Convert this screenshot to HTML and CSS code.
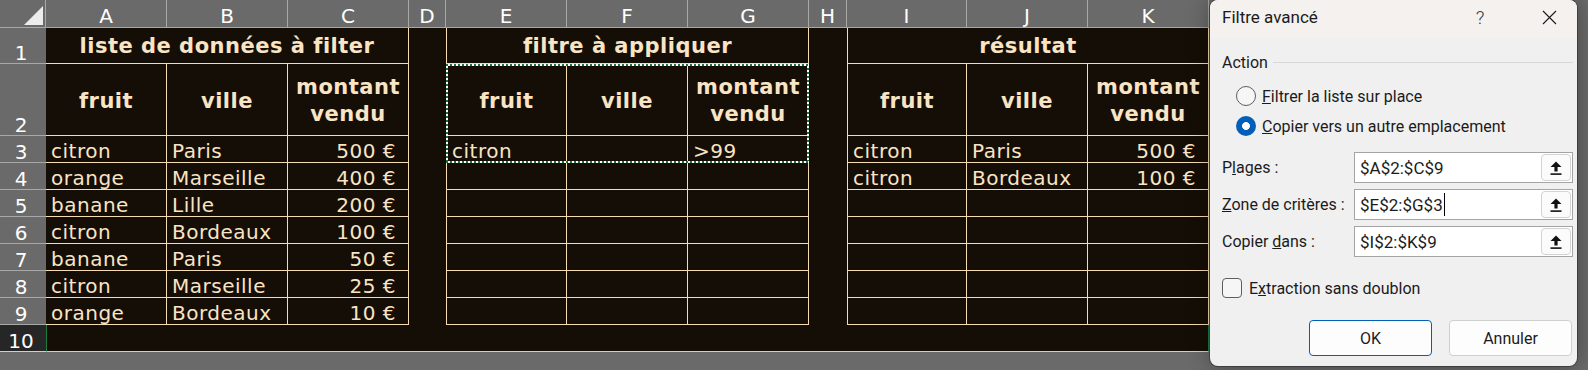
FILE: index.html
```html
<!DOCTYPE html>
<html lang="fr">
<head>
<meta charset="utf-8">
<title>Filtre avancé</title>
<link rel="stylesheet" href="styles.css">
</head>
<body>
<div class="screen">
  <div class="sheet">
    <div class="corner"></div>
    <div class="ch">A</div><div class="ch">B</div><div class="ch">C</div><div class="ch">D</div>
    <div class="ch">E</div><div class="ch">F</div><div class="ch">G</div><div class="ch">H</div>
    <div class="ch">I</div><div class="ch">J</div><div class="ch">K</div>

    <div class="rh">1</div>
    <div class="c title">liste de données à filter</div>
    <div class="c"></div>
    <div class="c title bl">filtre à appliquer</div>
    <div class="c"></div>
    <div class="c title bl">résultat</div>

    <div class="rh">2</div>
    <div class="c th b">fruit</div><div class="c th b">ville</div><div class="c th b">montant vendu</div>
    <div class="c"></div>
    <div class="c th b bl">fruit</div><div class="c th b">ville</div><div class="c th b">montant vendu</div>
    <div class="c"></div>
    <div class="c th b bl">fruit</div><div class="c th b">ville</div><div class="c th b">montant vendu</div>

    <div class="rh">3</div>
    <div class="c b">citron</div><div class="c b">Paris</div><div class="c b num">500 €</div>
    <div class="c"></div>
    <div class="c b bl">citron</div><div class="c b"></div><div class="c b">&gt;99</div>
    <div class="c"></div>
    <div class="c b bl">citron</div><div class="c b">Paris</div><div class="c b num">500 €</div>

    <div class="rh">4</div>
    <div class="c b">orange</div><div class="c b">Marseille</div><div class="c b num">400 €</div>
    <div class="c"></div>
    <div class="c b bl"></div><div class="c b"></div><div class="c b"></div>
    <div class="c"></div>
    <div class="c b bl">citron</div><div class="c b">Bordeaux</div><div class="c b num">100 €</div>

    <div class="rh">5</div>
    <div class="c b">banane</div><div class="c b">Lille</div><div class="c b num">200 €</div>
    <div class="c"></div>
    <div class="c b bl"></div><div class="c b"></div><div class="c b"></div>
    <div class="c"></div>
    <div class="c b bl"></div><div class="c b"></div><div class="c b"></div>

    <div class="rh">6</div>
    <div class="c b">citron</div><div class="c b">Bordeaux</div><div class="c b num">100 €</div>
    <div class="c"></div>
    <div class="c b bl"></div><div class="c b"></div><div class="c b"></div>
    <div class="c"></div>
    <div class="c b bl"></div><div class="c b"></div><div class="c b"></div>

    <div class="rh">7</div>
    <div class="c b">banane</div><div class="c b">Paris</div><div class="c b num">50 €</div>
    <div class="c"></div>
    <div class="c b bl"></div><div class="c b"></div><div class="c b"></div>
    <div class="c"></div>
    <div class="c b bl"></div><div class="c b"></div><div class="c b"></div>

    <div class="rh">8</div>
    <div class="c b">citron</div><div class="c b">Marseille</div><div class="c b num">25 €</div>
    <div class="c"></div>
    <div class="c b bl"></div><div class="c b"></div><div class="c b"></div>
    <div class="c"></div>
    <div class="c b bl"></div><div class="c b"></div><div class="c b"></div>

    <div class="rh">9</div>
    <div class="c b">orange</div><div class="c b">Bordeaux</div><div class="c b num">10 €</div>
    <div class="c"></div>
    <div class="c b bl"></div><div class="c b"></div><div class="c b"></div>
    <div class="c"></div>
    <div class="c b bl"></div><div class="c b"></div><div class="c b"></div>

    <div class="rh active">10</div>
    <div class="c row10"></div>

    <div class="ants"></div>
  </div>

  <div class="dialog">
    <div class="titlebar">
      <span class="dtitle">Filtre avancé</span>
      <span class="tb-btn help">?</span>
      <span class="tb-btn close">
        <svg width="15" height="15" viewBox="0 0 15 15"><path d="M1 1 L14 14 M14 1 L1 14" stroke="#1b1b1b" stroke-width="1.1" fill="none"/></svg>
      </span>
    </div>
    <div class="dbody">
      <div class="group">
        <span>Action</span>
        <span class="rule"></span>
      </div>
      <div class="radio-row first">
        <span class="radio"></span>
        <span><u>F</u>iltrer la liste sur place</span>
      </div>
      <div class="radio-row">
        <span class="radio on"></span>
        <span><u>C</u>opier vers un autre emplacement</span>
      </div>
      <div class="fields">
        <div class="field">
          <span class="flabel">P<u>l</u>ages :</span>
          <span class="input"><span class="val">$A$2:$C$9</span><span class="pick"><svg width="12" height="14" viewBox="0 0 12 14"><path d="M6 0.5 L11.5 6 H7.6 V10.5 H4.4 V6 H0.5 Z" fill="#111"/><rect x="0.5" y="12.3" width="11" height="1.6" fill="#111"/></svg></span></span>
        </div>
        <div class="field">
          <span class="flabel"><u>Z</u>one de critères :</span>
          <span class="input"><span class="val">$E$2:$G$3<span class="caret"></span></span><span class="pick"><svg width="12" height="14" viewBox="0 0 12 14"><path d="M6 0.5 L11.5 6 H7.6 V10.5 H4.4 V6 H0.5 Z" fill="#111"/><rect x="0.5" y="12.3" width="11" height="1.6" fill="#111"/></svg></span></span>
        </div>
        <div class="field">
          <span class="flabel">Copier <u>d</u>ans :</span>
          <span class="input"><span class="val">$I$2:$K$9</span><span class="pick"><svg width="12" height="14" viewBox="0 0 12 14"><path d="M6 0.5 L11.5 6 H7.6 V10.5 H4.4 V6 H0.5 Z" fill="#111"/><rect x="0.5" y="12.3" width="11" height="1.6" fill="#111"/></svg></span></span>
        </div>
      </div>
      <div class="check-row">
        <span class="check"></span>
        <span>E<u>x</u>traction sans doublon</span>
      </div>
      <div class="buttons">
        <span class="btn default">OK</span>
        <span class="btn">Annuler</span>
      </div>
    </div>
  </div>
</div>
</body>
</html>
```

FILE: styles.css
```css
html, body {
  margin: 0;
  padding: 0;
  background: #6a6a6a;
}

.screen {
  position: relative;
  width: 1588px;
  height: 370px;
  overflow: hidden;
  background: #6a6a6a;
}

.sheet {
  position: relative;
  display: grid;
  width: 1209px;
  grid-template-columns: 46px 121px 121px 121px 37px 121px 121px 121px 38px 120px 121px 121px;
  grid-template-rows: 28px 36px 72px repeat(8, 27px);
  font-family: "DejaVu Sans", Verdana, sans-serif;
}

.sheet > div {
  box-sizing: border-box;
}

/* headers */
.corner {
  position: relative;
  background: #6a6a6a;
  border-right: 1px solid #a8a8a8;
  border-bottom: 1px solid #a8a8a8;
}
.corner::after {
  content: "";
  position: absolute;
  left: 24px;
  top: 6px;
  width: 19px;
  height: 19px;
  background: #ececec;
  clip-path: polygon(100% 0, 100% 100%, 0 100%);
}

.ch {
  background: #6a6a6a;
  color: #ffffff;
  border-right: 1px solid #a8a8a8;
  border-bottom: 1px solid #a8a8a8;
  font-size: 20px;
  line-height: 20px;
  display: flex;
  align-items: flex-end;
  justify-content: center;
  padding-bottom: 1px;
}

.rh {
  background: #6a6a6a;
  color: #ffffff;
  border-bottom: 1px solid #a8a8a8;
  font-size: 20px;
  line-height: 20px;
  display: flex;
  align-items: flex-end;
  justify-content: center;
  padding-right: 4px;
}
.rh.active {
  background: #262626;
  border-bottom-color: #cfcfcf;
}

/* cells */
.c {
  background: #150e06;
  color: #f9e4c4;
  font-size: 20px;
  letter-spacing: 0.5px;
  line-height: 21px;
  white-space: nowrap;
  display: flex;
  align-items: flex-end;
  padding: 0 5px;
}
.b {
  border-right: 1px solid #f5dcb2;
  border-bottom: 1px solid #f5dcb2;
}
.bl {
  border-left: 1px solid #f5dcb2;
}
.num {
  justify-content: flex-end;
  padding-right: 12px;
}
.th {
  font-weight: bold;
  font-size: 21px;
  line-height: 27px;
  white-space: normal;
  text-align: center;
  justify-content: center;
  align-items: center;
  padding-top: 3px;
}
.title {
  grid-column: span 3;
  font-weight: bold;
  font-size: 21px;
  line-height: 27px;
  justify-content: center;
  align-items: center;
  padding-top: 2px;
  border-bottom: 1px solid #f5dcb2;
  border-right: 1px solid #f5dcb2;
}
.row10 {
  grid-column: span 11;
  border-left: 1px solid #1e7b46;
  border-right: 1px solid #1e7b46;
  border-bottom: 1px solid #cfcfcf;
}

.ants {
  position: absolute;
  grid-column: 6 / 9;
  grid-row: 3 / 5;
  inset: 0;
  pointer-events: none;
  background:
    repeating-linear-gradient(90deg, #1d6f40 0 2.5px, #ffffff 2.5px 4px) top left / 100% 2px no-repeat,
    repeating-linear-gradient(90deg, #1d6f40 0 2.5px, #ffffff 2.5px 4px) bottom left / 100% 2px no-repeat,
    repeating-linear-gradient(180deg, #1d6f40 0 2.5px, #ffffff 2.5px 4px) top left / 2px 100% no-repeat,
    repeating-linear-gradient(180deg, #1d6f40 0 2.5px, #ffffff 2.5px 4px) top right / 2px 100% no-repeat;
}

/* dialog */
.dialog {
  position: absolute;
  left: 1210px;
  top: 0;
  width: 367px;
  height: 366px;
  box-sizing: border-box;
  background: #f0f0f0;
  border-radius: 8px;
  box-shadow: 0 0 0 1px rgba(40, 40, 40, 0.55), 0 0 22px rgba(0, 0, 0, 0.35);
  font-family: Roboto, "Noto Sans", "Liberation Sans", sans-serif;
  font-size: 16px;
  color: #1b1b1b;
  display: flex;
  flex-direction: column;
  overflow: hidden;
}

.titlebar {
  height: 38px;
  flex: none;
  background: #f4f1ee;
  display: flex;
  align-items: center;
  padding: 0 5px 4px 12px;
  box-sizing: border-box;
}
.dtitle {
  flex: 1;
  font-size: 17px;
}
.tb-btn {
  width: 46px;
  display: flex;
  justify-content: center;
  align-items: center;
}
.help {
  margin-right: 23px;
  font-size: 19px;
  font-weight: 300;
  color: #333;
}

.dbody {
  padding: 0 4px 0 12px;
  display: flex;
  flex-direction: column;
}

.group {
  margin-top: 14px;
  height: 20px;
  display: flex;
  align-items: center;
}
.rule {
  flex: 1;
  height: 1px;
  background: #d8d8d8;
  margin-left: 5px;
}

.radio-row {
  height: 20px;
  margin-top: 10px;
  margin-left: 14px;
  display: flex;
  align-items: center;
  gap: 6px;
}
.radio-row.first {
  margin-top: 14px;
}
.radio {
  width: 20px;
  height: 20px;
  box-sizing: border-box;
  border-radius: 50%;
  border: 1px solid #5e5e5e;
  background: #f6f6f6;
}
.radio.on {
  border: none;
  background: radial-gradient(circle, #ffffff 0 3.6px, #005fb8 4.2px);
}

.fields {
  margin-top: 16px;
  display: flex;
  flex-direction: column;
  gap: 6px;
}
.field {
  height: 31px;
  display: flex;
  align-items: center;
}
.flabel {
  width: 132px;
  flex: none;
}
.input {
  width: 219px;
  height: 31px;
  box-sizing: border-box;
  background: #ffffff;
  border: 1px solid #a4a4a4;
  display: flex;
  align-items: center;
  padding: 0 1px 0 5px;
  font-size: 17px;
}
.val {
  flex: 1;
  display: flex;
  align-items: center;
}
.caret {
  display: inline-block;
  width: 1px;
  height: 23px;
  background: #000;
  margin-left: 1px;
}
.pick {
  width: 30px;
  height: 27px;
  box-sizing: border-box;
  border: 1px solid #d3d3d3;
  border-radius: 4px;
  background: #fbfbfb;
  display: flex;
  align-items: center;
  justify-content: center;
}

.check-row {
  margin-top: 21px;
  height: 20px;
  display: flex;
  align-items: center;
  gap: 7px;
}
.check {
  width: 20px;
  height: 20px;
  box-sizing: border-box;
  border: 1px solid #5e5e5e;
  border-radius: 4px;
  background: #f6f6f6;
}

.buttons {
  margin-top: 22px;
  display: flex;
  justify-content: flex-end;
  gap: 17px;
  padding-right: 1px;
}
.btn {
  width: 123px;
  height: 36px;
  box-sizing: border-box;
  border: 1px solid #d0d0d0;
  border-radius: 4px;
  background: #fdfdfd;
  display: flex;
  align-items: center;
  justify-content: center;
}
.btn.default {
  border-color: #005fb8;
}
```
